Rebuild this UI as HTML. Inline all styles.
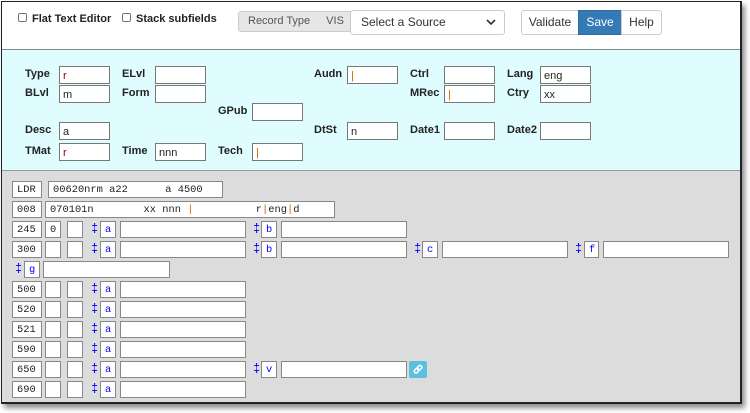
<!DOCTYPE html>
<html><head><style>
*{box-sizing:border-box;margin:0;padding:0}
body{width:750px;height:413px;background:#fff;position:relative;overflow:hidden;font-family:"Liberation Sans",sans-serif}
#frame{position:absolute;left:1px;top:1px;width:741px;height:403px;border:2px solid #222;border-width:1px 2px 2px 1px;box-shadow:3px 4px 5px rgba(0,0,0,.45);background:#fff;overflow:hidden}
.a{position:absolute;white-space:nowrap}
#cy{position:absolute;left:0;top:47px;width:100%;height:122px;background:#dffdfe;border-top:1px solid #888}
#gr{position:absolute;left:0;top:168px;width:100%;height:240px;background:#dcdcdc;border-top:1px solid #999}
.lb{position:absolute;font-size:11px;font-weight:bold;color:#222}
.in{position:absolute;width:51px;height:18px;background:#fff;border:1px solid #777;font-size:11px;padding:3px 0 0 3px;color:#222}
.r{color:#8b0000}
.m{position:absolute;height:17px;background:#fff;border:1px solid #888;font:10.4px "Liberation Mono",monospace;padding:2px 0 0 4px;color:#222;white-space:pre;overflow:hidden}
.sf{color:#00f}
.dg{position:absolute;color:#00f;font:12px "Liberation Mono",monospace}
.btn{position:absolute;top:8px;height:25px;border:1px solid #ccc;font-size:12px;text-align:center;line-height:23px;color:#333;background:#fff}
</style></head><body>
<div id="frame">
<div class="a" style="left:16px;top:11px;width:9px;height:9px;border:1px solid #777;border-radius:2px"></div>
<div class="a" style="left:30px;top:11px;font-size:11px;font-weight:bold;color:#222">Flat Text Editor</div>
<div class="a" style="left:120px;top:11px;width:9px;height:9px;border:1px solid #777;border-radius:2px"></div>
<div class="a" style="left:134px;top:11px;font-size:11px;font-weight:bold;color:#222">Stack subfields</div>
<div class="a" style="left:236px;top:9px;width:116px;height:21px;background:#e6e6e6;border:1px solid #ccc;border-radius:3px;font-size:11px;color:#555;line-height:19px;padding-left:9px">Record Type<span style="margin-left:16px">VIS</span></div>
<div class="a" style="left:348px;top:8px;width:155px;height:25px;background:#fff;border:1px solid #ccc;border-radius:3px;font-size:12px;color:#333;line-height:23px;padding-left:10px">Select a Source<svg style="position:absolute;right:8px;top:8px" width="10" height="7" viewBox="0 0 10 7"><path d="M1 1l4 4 4-4" stroke="#333" stroke-width="1.6" fill="none"/></svg></div>
<div class="btn" style="left:519px;width:58px;border-radius:3px 0 0 3px">Validate</div>
<div class="btn" style="left:576px;width:44px;background:#337ab7;border-color:#2e6da4;color:#fff">Save</div>
<div class="btn" style="left:619px;width:41px;border-radius:0 3px 3px 0">Help</div>

<div id="cy">
<div class="lb" style="left:23px;top:18px">Type</div><div class="in r" style="left:57px;top:16px">r</div>
<div class="lb" style="left:120px;top:18px">ELvl</div><div class="in" style="left:153px;top:16px"></div>
<div class="lb" style="left:312px;top:18px">Audn</div><div class="in r" style="left:345px;top:16px;color:#c60">|</div>
<div class="lb" style="left:408px;top:18px">Ctrl</div><div class="in" style="left:442px;top:16px"></div>
<div class="lb" style="left:505px;top:18px">Lang</div><div class="in" style="left:538px;top:16px">eng</div>
<div class="lb" style="left:23px;top:37px">BLvl</div><div class="in" style="left:57px;top:35px">m</div>
<div class="lb" style="left:120px;top:37px">Form</div><div class="in" style="left:153px;top:35px"></div>
<div class="lb" style="left:408px;top:37px">MRec</div><div class="in" style="left:442px;top:35px;color:#c60">|</div>
<div class="lb" style="left:505px;top:37px">Ctry</div><div class="in" style="left:538px;top:35px">xx</div>
<div class="lb" style="left:216px;top:55px">GPub</div><div class="in" style="left:250px;top:53px"></div>
<div class="lb" style="left:23px;top:74px">Desc</div><div class="in" style="left:57px;top:72px">a</div>
<div class="lb" style="left:312px;top:74px">DtSt</div><div class="in" style="left:345px;top:72px">n</div>
<div class="lb" style="left:408px;top:74px">Date1</div><div class="in" style="left:442px;top:72px"></div>
<div class="lb" style="left:505px;top:74px">Date2</div><div class="in" style="left:538px;top:72px"></div>
<div class="lb" style="left:23px;top:95px">TMat</div><div class="in r" style="left:57px;top:93px">r</div>
<div class="lb" style="left:120px;top:95px">Time</div><div class="in" style="left:153px;top:93px">nnn</div>
<div class="lb" style="left:216px;top:95px">Tech</div><div class="in" style="left:250px;top:93px;color:#c60">|</div>
</div>

<div id="gr">
<div class="m" style="left:10px;top:10px;width:30px">LDR</div><div class="m" style="left:46px;top:10px;width:175px">00620nrm a22      a 4500</div>
<div class="m" style="left:10px;top:30px;width:30px">008</div><div class="m" style="left:43px;top:30px;width:290px">070101n        xx nnn <span style="color:#c60">|</span>          r<span style="color:#c60">|</span>eng<span style="color:#c60">|</span>d</div>

<div class="m" style="left:10px;top:50px;width:30px">245</div><div class="m" style="left:43px;top:50px;width:16px">0</div><div class="m" style="left:65px;top:50px;width:16px"></div>
<div class="dg" style="left:89px;top:51px">‡</div><div class="m sf" style="left:98px;top:50px;width:16px">a</div><div class="m" style="left:118px;top:50px;width:126px"></div>
<div class="dg" style="left:251px;top:51px">‡</div><div class="m sf" style="left:259px;top:50px;width:16px">b</div><div class="m" style="left:279px;top:50px;width:126px"></div>

<div class="m" style="left:10px;top:70px;width:30px">300</div><div class="m" style="left:43px;top:70px;width:16px"></div><div class="m" style="left:65px;top:70px;width:16px"></div>
<div class="dg" style="left:89px;top:71px">‡</div><div class="m sf" style="left:98px;top:70px;width:16px">a</div><div class="m" style="left:118px;top:70px;width:126px"></div>
<div class="dg" style="left:251px;top:71px">‡</div><div class="m sf" style="left:259px;top:70px;width:16px">b</div><div class="m" style="left:279px;top:70px;width:126px"></div>
<div class="dg" style="left:412px;top:71px">‡</div><div class="m sf" style="left:420px;top:70px;width:16px">c</div><div class="m" style="left:440px;top:70px;width:126px"></div>
<div class="dg" style="left:573px;top:71px">‡</div><div class="m sf" style="left:582px;top:70px;width:15px">f</div><div class="m" style="left:601px;top:70px;width:126px"></div>
<div class="dg" style="left:13px;top:91px">‡</div><div class="m sf" style="left:22px;top:90px;width:16px">g</div><div class="m" style="left:41px;top:90px;width:127px"></div>

<div class="m" style="left:10px;top:110px;width:30px">500</div><div class="m" style="left:43px;top:110px;width:16px"></div><div class="m" style="left:65px;top:110px;width:16px"></div><div class="dg" style="left:89px;top:111px">‡</div><div class="m sf" style="left:98px;top:110px;width:16px">a</div><div class="m" style="left:118px;top:110px;width:126px"></div>
<div class="m" style="left:10px;top:130px;width:30px">520</div><div class="m" style="left:43px;top:130px;width:16px"></div><div class="m" style="left:65px;top:130px;width:16px"></div><div class="dg" style="left:89px;top:131px">‡</div><div class="m sf" style="left:98px;top:130px;width:16px">a</div><div class="m" style="left:118px;top:130px;width:126px"></div>
<div class="m" style="left:10px;top:150px;width:30px">521</div><div class="m" style="left:43px;top:150px;width:16px"></div><div class="m" style="left:65px;top:150px;width:16px"></div><div class="dg" style="left:89px;top:151px">‡</div><div class="m sf" style="left:98px;top:150px;width:16px">a</div><div class="m" style="left:118px;top:150px;width:126px"></div>
<div class="m" style="left:10px;top:170px;width:30px">590</div><div class="m" style="left:43px;top:170px;width:16px"></div><div class="m" style="left:65px;top:170px;width:16px"></div><div class="dg" style="left:89px;top:171px">‡</div><div class="m sf" style="left:98px;top:170px;width:16px">a</div><div class="m" style="left:118px;top:170px;width:126px"></div>
<div class="m" style="left:10px;top:190px;width:30px">650</div><div class="m" style="left:43px;top:190px;width:16px"></div><div class="m" style="left:65px;top:190px;width:16px"></div><div class="dg" style="left:89px;top:191px">‡</div><div class="m sf" style="left:98px;top:190px;width:16px">a</div><div class="m" style="left:118px;top:190px;width:126px"></div>
<div class="dg" style="left:251px;top:191px">‡</div><div class="m sf" style="left:259px;top:190px;width:16px">v</div><div class="m" style="left:279px;top:190px;width:126px"></div>
<div class="a" style="left:407px;top:190px;width:18px;height:17px;background:#5bc0de;border-radius:2px"><svg width="18" height="17" viewBox="0 0 18 17"><g stroke="#fff" stroke-width="1.5" fill="none"><rect x="5" y="8" width="5" height="3.5" rx="1.7" transform="rotate(-45 7.5 9.7)"/><rect x="8" y="5" width="5" height="3.5" rx="1.7" transform="rotate(-45 10.5 6.7)"/></g></svg></div>
<div class="m" style="left:10px;top:210px;width:30px">690</div><div class="m" style="left:43px;top:210px;width:16px"></div><div class="m" style="left:65px;top:210px;width:16px"></div><div class="dg" style="left:89px;top:211px">‡</div><div class="m sf" style="left:98px;top:210px;width:16px">a</div><div class="m" style="left:118px;top:210px;width:126px"></div>
</div>
</div>
</body></html>
